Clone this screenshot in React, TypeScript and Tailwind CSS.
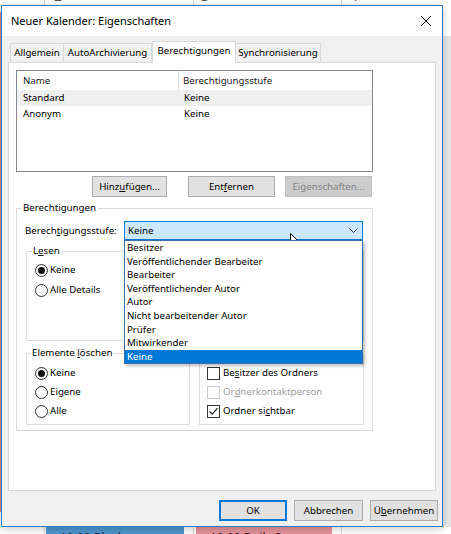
import React from "react"

function Radio({ checked, children }: { checked?: boolean; children: React.ReactNode }) {
  return (
    <div className="flex items-center h-[16px] gap-[2px]">
      <span className="w-[13px] h-[13px] rounded-full border border-[#333333] bg-white flex items-center justify-center">
        {checked && <span className="w-[7px] h-[7px] rounded-full bg-[#111111]" />}
      </span>
      <span>{children}</span>
    </div>
  )
}

function Check({ checked, disabled, children }: { checked?: boolean; disabled?: boolean; children: React.ReactNode }) {
  return (
    <div className={`flex items-center h-[16px] gap-[3px] ${disabled ? "text-[#a0a0a0]" : ""}`}>
      <span
        className={`w-[13px] h-[13px] border bg-white flex items-center justify-center ${
          disabled ? "border-[#cccccc]" : "border-[#333333]"
        }`}
      >
        {checked && (
          <svg width="11" height="11" viewBox="0 0 11 11">
            <path d="M1.5 5.5 L4.2 8.2 L9.5 2.2" fill="none" stroke="#222" strokeWidth="1.2" />
          </svg>
        )}
      </span>
      <span>{children}</span>
    </div>
  )
}

function Btn({ w, disabled, children }: { w: string; disabled?: boolean; children: React.ReactNode }) {
  return (
    <div
      className={`${w} h-[21px] border flex items-center justify-center ${
        disabled ? "bg-[#cccccc] border-[#bfbfbf] text-[#838383]" : "bg-[#e1e1e1] border-[#adadad]"
      }`}
    >
      {children}
    </div>
  )
}

const levels = [
  "Besitzer",
  "Veröffentlichender Bearbeiter",
  "Bearbeiter",
  "Veröffentlichender Autor",
  "Autor",
  "Nicht bearbeitender Autor",
  "Prüfer",
  "Mitwirkender",
  "Keine",
]

function Backdrop() {
  return (
    <div className="absolute inset-0 flex">
      <div className="w-[44px] flex">
        <div className="w-[2px] mt-[12px] h-[500px] bg-[#d98a90]" />
      </div>
      <div className="w-[149px] border-l border-[#d6d6d6] flex flex-col justify-between">
        <div className="text-[14px] leading-[14px] -mt-[11px] ml-[9px] text-[#555]">2</div>
        <div className="ml-[1px] w-[138px] h-[20px] -mb-[12px] bg-[#4d95cd] text-[#1b2a4a] text-[12px] leading-[14px] pl-[14px] pt-[5px]">
          10:00 Blocker
        </div>
      </div>
      <div className="w-[148px] border-l border-[#d6d6d6] flex flex-col justify-between">
        <div className="text-[14px] leading-[14px] -mt-[11px] ml-[7px] text-[#555]">3</div>
        <div className="ml-[2px] w-[136px] h-[20px] -mb-[12px] bg-[#e4929a] text-[#3a1a1e] text-[12px] leading-[14px] pl-[14px] pt-[5px]">
          10:00 Daily Scrum
        </div>
      </div>
      <div className="flex-1 border-l border-[#d6d6d6] flex justify-between">
        <div className="text-[14px] leading-[14px] -mt-[11px] ml-[8px] text-[#555]">4</div>
        <div className="w-[8px] mt-[36px] mb-[7px] bg-[#e6e6e6]" />
      </div>
    </div>
  )
}

function Cursor() {
  return (
    <svg className="absolute left-[290px] top-[233px]" width="13" height="20" viewBox="0 0 13 20">
      <path
        d="M0.5 0.5 L0.5 16.5 L4.5 12.8 L7.2 18.8 L9.6 17.8 L7 11.8 L12 11.8 Z"
        fill="white"
        stroke="black"
        strokeWidth="1"
        strokeLinejoin="miter"
      />
    </svg>
  )
}

export default function App() {
  return (
    <div className="relative w-[451px] h-[534px] overflow-hidden bg-white text-[9.7px] leading-[16px] text-black font-['Noto_Sans','Liberation_Sans',sans-serif]">
      <Backdrop />

      {/* Dialog */}
      <div className="absolute left-[1px] top-[5px] w-[442px] h-[522px] border border-[#2e7bc4] bg-[#f0f0f0] flex flex-col shadow-[0_2px_8px_rgba(0,0,0,0.2)]">
        <div className="h-[30px] bg-white flex items-center justify-between pl-[9px] pr-[11px]">
          <span className="text-[11px]">Neuer Kalender: Eigenschaften</span>
          <svg width="10" height="10" viewBox="0 0 10 10">
            <path d="M0 0 L10 10 M10 0 L0 10" stroke="#111" strokeWidth="1" />
          </svg>
        </div>

        <div className="flex-1 flex flex-col px-[6px] pt-[5px]">
          {/* Tabs */}
          <div className="flex items-end h-[21px] pl-[2px] relative z-10">
            <div className="w-[54px] h-[19px] border border-b-0 border-[#d9d9d9] bg-[#f0f0f0] flex items-center justify-center">
              Allgemein
            </div>
            <div className="w-[88px] h-[19px] border border-l-0 border-b-0 border-[#d9d9d9] bg-[#f0f0f0] flex items-center justify-center">
              AutoArchivierung
            </div>
            <div className="w-[84px] h-[22px] -mb-[1px] border border-b-0 border-[#d9d9d9] bg-white flex items-center justify-center pb-[3px]">
              Berechtigungen
            </div>
            <div className="w-[85px] h-[19px] border border-l-0 border-b-0 border-[#d9d9d9] bg-[#f0f0f0] flex items-center justify-center">
              Synchronisierung
            </div>
          </div>

          {/* Panel */}
          <div className="h-[429px] bg-white border border-[#d9d9d9] pt-[7px] pl-[7px] flex flex-col">
            <div className="w-[357px] h-[102px] border border-[#828790] flex flex-col">
              <div className="h-[19px] flex text-[#1a1a1a]">
                <div className="w-[162px] pl-[6px] border-r border-[#e5e5e5] flex items-center">Name</div>
                <div className="pl-[4px] flex items-center">Berechtigungsstufe</div>
              </div>
              <div className="h-[16px] flex items-center bg-[#efefef]">
                <div className="w-[162px] pl-[6px]">Standard</div>
                <div className="pl-[5px]">Keine</div>
              </div>
              <div className="h-[16px] flex items-center">
                <div className="w-[162px] pl-[6px]">Anonym</div>
                <div className="pl-[5px]">Keine</div>
              </div>
            </div>

            <div className="mt-[4px] flex">
              <div className="ml-[76px]">
                <Btn w="w-[75px]">
                  Hinz<u>u</u>fügen...
                </Btn>
              </div>
              <div className="ml-[21px]">
                <Btn w="w-[87px]">
                  Ent<u>f</u>ernen
                </Btn>
              </div>
              <div className="ml-[10px]">
                <Btn w="w-[87px]" disabled>
                  Eigenschaften...
                </Btn>
              </div>
            </div>

            {/* Berechtigungen group */}
            <fieldset className="mt-[4px] w-[357px] border border-[#dcdcdc] p-0">
              <legend className="ml-[4px] px-[2px] leading-[14px]">Berechtigungen</legend>

              <div className="pl-[9px] pr-[8px] pb-[5px]">
                <div className="mt-[6px] flex items-center h-[19px]">
                  <div className="w-[98px] -ml-[1px]">
                    Berech<u>t</u>igungsstufe:
                  </div>
                  <div className="relative w-[239px] h-[19px] ml-[1px] bg-[#cce8ff] border border-[#0078d7] flex items-center justify-between pl-[3px] pr-[4px]">
                    <span>Keine</span>
                    <svg width="9" height="5" viewBox="0 0 9 5">
                      <path d="M0.5 0.5 L4.5 4.5 L8.5 0.5" fill="none" stroke="#444" strokeWidth="1" />
                    </svg>

                    {/* open dropdown list */}
                    <div className="absolute left-[-1px] top-[18px] w-[239px] z-20 bg-white border border-[#3a70a8] shadow-[2px_2px_3px_rgba(0,0,0,0.25)] flex flex-col">
                      {levels.map((l, i) => (
                        <div
                          key={l}
                          className={`h-[13.6px] leading-[13.6px] pl-[2px] ${
                            i === levels.length - 1 ? "bg-[#0078d7] text-white" : ""
                          }`}
                        >
                          {l}
                        </div>
                      ))}
                    </div>
                  </div>
                </div>

                <div className="mt-[4px] grid grid-cols-[164px_165px] items-start gap-x-[9px] gap-y-[5px]">
                  <fieldset className="h-[97px] border border-[#dcdcdc] p-0">
                    <legend className="ml-[5px] px-[1px] leading-[14px]">
                      L<u>e</u>sen
                    </legend>
                    <div className="pl-[8px] mt-[4px] flex flex-col gap-[4px]">
                      <Radio checked>Keine</Radio>
                      <Radio>Alle Details</Radio>
                    </div>
                  </fieldset>

                  {/* "Schreiben" group, hidden under the open list */}
                  <div className="h-[90px] mt-[7px] border border-[#dcdcdc]" />

                  <fieldset className="h-[79px] border border-[#dcdcdc] p-0">
                    <legend className="ml-[4px] px-[1px] leading-[14px]">
                      Elemente <u>l</u>öschen
                    </legend>
                    <div className="pl-[8px] mt-[5px] flex flex-col gap-[3px]">
                      <Radio checked>Keine</Radio>
                      <Radio>Eigene</Radio>
                      <Radio>Alle</Radio>
                    </div>
                  </fieldset>

                  <div className="h-[72px] mt-[7px] border border-[#dcdcdc] pl-[7px] pt-[11px] flex flex-col gap-[3px]">
                    <Check>
                      Be<u>s</u>itzer des Ordners
                    </Check>
                    <Check disabled>
                      Or<u>d</u>nerkontaktperson
                    </Check>
                    <Check checked>
                      Ordner si<u>c</u>htbar
                    </Check>
                  </div>
                </div>
              </div>
            </fieldset>
          </div>

          {/* Dialog buttons */}
          <div className="mt-[9px] -mr-[2px] flex justify-end gap-[7px]">
            <div className="w-[68px] h-[21px] border-2 border-[#0078d7] bg-[#e1e1e1] flex items-center justify-center">
              OK
            </div>
            <Btn w="w-[69px]">Abbrechen</Btn>
            <Btn w="w-[68px]">
              Ü<u>b</u>ernehmen
            </Btn>
          </div>
        </div>
      </div>

      <Cursor />
    </div>
  )
}
